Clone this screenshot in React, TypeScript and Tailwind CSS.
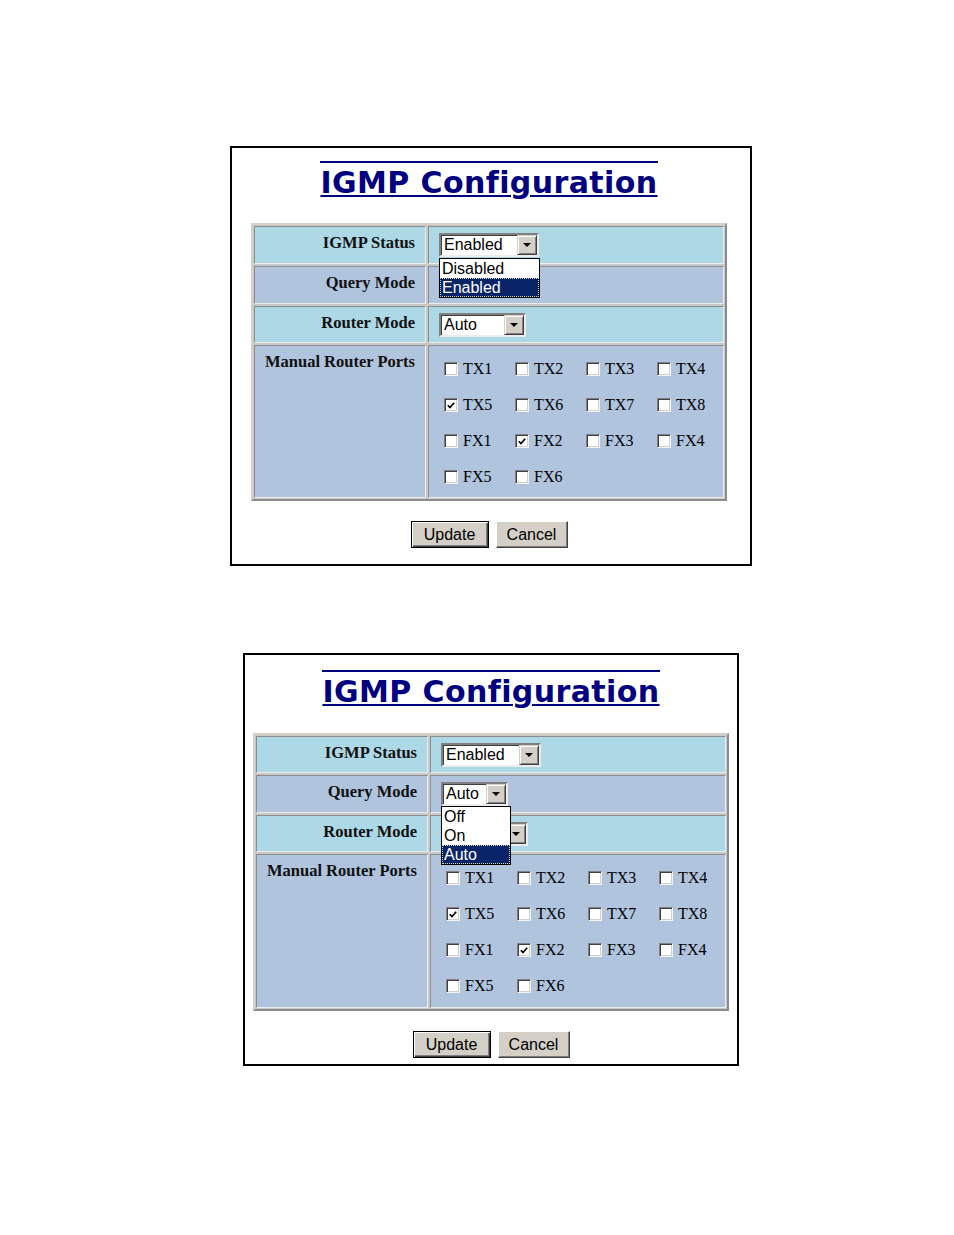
import React from 'react';

type Opt = { label: string; selected?: boolean };

const ports = ['TX1', 'TX2', 'TX3', 'TX4', 'TX5', 'TX6', 'TX7', 'TX8', 'FX1', 'FX2', 'FX3', 'FX4', 'FX5', 'FX6'];
const checked = ['TX5', 'FX2'];

function DropList({ options, className }: { options: Opt[]; className: string }) {
  return (
    <div className={`absolute left-0 top-full z-10 border border-black bg-white ${className}`}>
      {options.map((o) => (
        <div
          key={o.label}
          className={
            o.selected
              ? "h-[19px] border border-dotted border-[#d8d8a8] bg-[#0a246a] pl-[1px] text-[16px] leading-[17px] text-white font-['Liberation_Sans',Arial,sans-serif]"
              : "h-[19px] pl-[2px] text-[16px] leading-[19px] text-black font-['Liberation_Sans',Arial,sans-serif]"
          }
        >
          {o.label}
        </div>
      ))}
    </div>
  );
}

// value left out where the open list covers the box
function Select({ value, className, list }: { value?: string; className: string; list?: React.ReactNode }) {
  return (
    <div className={`relative h-[24px] ${className}`}>
      <div className="flex h-full w-full border-2 border-t-[#808080] border-l-[#808080] border-r-[#ececec] border-b-[#ececec] bg-white shadow-[inset_1px_1px_0_#404040]">
        <span className="flex-1 overflow-hidden whitespace-nowrap pl-[3px] pt-[1px] text-[16px] leading-[18px] text-black font-['Liberation_Sans',Arial,sans-serif]">
          {value}
        </span>
        <span className="flex h-[20px] w-[20px] items-center justify-center border border-t-[#d4d0c8] border-l-[#d4d0c8] border-r-[#404040] border-b-[#404040] bg-[#d4d0c8] shadow-[inset_1px_1px_0_#fff,inset_-1px_-1px_0_#808080]">
          <svg width="8" height="4" viewBox="0 0 8 4">
            <path d="M0 0h8L4 4z" fill="#000" />
          </svg>
        </span>
      </div>
      {list}
    </div>
  );
}

function CheckBox({ on }: { on: boolean }) {
  return (
    <span className="flex h-[14px] w-[14px] shrink-0 items-center justify-center border border-t-[#808080] border-l-[#808080] border-r-[#f4f4f4] border-b-[#f4f4f4] bg-white shadow-[inset_1px_1px_0_#404040,inset_-1px_-1px_0_#d4d0c8]">
      {on && (
        <svg width="8" height="7" viewBox="0 0 8 7">
          <path d="M0.8 3.2 L3 5.6 L7.2 0.8" stroke="#000" strokeWidth="1.7" fill="none" />
        </svg>
      )}
    </span>
  );
}

const labelCell =
  "border border-t-[#8c8c8c] border-l-[#8c8c8c] border-r-[#ececec] border-b-[#ececec] pr-[10px] pt-[7px] text-right text-[16.5px] font-bold leading-[18px] text-[#111] font-['Liberation_Serif','Times_New_Roman',serif]";
const valueCell =
  "flex items-center border border-t-[#8c8c8c] border-l-[#8c8c8c] border-r-[#ececec] border-b-[#ececec] pl-[10px]";

type PanelProps = {
  open: 'status' | 'query';
  outer: string;
  column: string;
  titleTop: string;
  tableTop: string;
  rows: string;
  bottom: string;
};

function Panel({ open, outer, column, titleTop, tableTop, rows, bottom }: PanelProps) {
  const statusList =
    open === 'status' ? (
      <DropList className="mt-[1px] w-[101px]" options={[{ label: 'Disabled' }, { label: 'Enabled', selected: true }]} />
    ) : null;
  const queryList =
    open === 'query' ? (
      <DropList className="w-[70px]" options={[{ label: 'Off' }, { label: 'On' }, { label: 'Auto', selected: true }]} />
    ) : null;

  return (
    <div className={`border-2 border-black bg-white ${outer}`}>
      <div className={`w-[476px] ${column}`}>
        <div className={`text-center ${titleTop}`}>
          <span className="inline-block border-t-2 border-[#000080] pt-[3px] text-[30px] font-bold leading-[34px] tracking-[0.4px] text-[#000080] underline decoration-2 underline-offset-[2px] font-['DejaVu_Sans',Verdana,sans-serif]">
            IGMP Configuration
          </span>
        </div>

        <div
          className={`grid grid-cols-[172px_296px] gap-[2px] border-2 border-t-[#d4d0c8] border-l-[#d4d0c8] border-r-[#8c8c8c] border-b-[#8c8c8c] bg-[#c8c8c8] p-[1px] ${rows} ${tableTop}`}
        >
          <div className={`${labelCell} bg-[#add8e6]`}>IGMP Status</div>
          <div className={`${valueCell} bg-[#add8e6]`}>
            <Select value="Enabled" className="w-[100px]" list={statusList} />
          </div>

          <div className={`${labelCell} bg-[#b0c4de]`}>Query Mode</div>
          <div className={`${valueCell} bg-[#b0c4de]`}>
            {open === 'query' && <Select value="Auto" className="w-[67px]" list={queryList} />}
          </div>

          <div className={`${labelCell} bg-[#add8e6]`}>Router Mode</div>
          <div className={`${valueCell} bg-[#add8e6]`}>
            <Select value={open === 'query' ? undefined : 'Auto'} className="w-[87px]" />
          </div>

          <div className={`${labelCell} bg-[#b0c4de]`}>Manual Router Ports</div>
          <div className="border border-t-[#8c8c8c] border-l-[#8c8c8c] border-r-[#ececec] border-b-[#ececec] bg-[#b0c4de] pl-[15px] pt-[14px]">
            <div className="grid grid-cols-[71px_71px_71px_71px] auto-rows-[36px]">
              {ports.map((p) => (
                <div key={p} className="flex h-[18px] items-center gap-[5px]">
                  <CheckBox on={checked.includes(p)} />
                  <span className="text-[16px] leading-[18px] text-black font-['Liberation_Serif','Times_New_Roman',serif]">{p}</span>
                </div>
              ))}
            </div>
          </div>
        </div>

        <div className={`flex justify-center gap-[7px] ${bottom}`}>
          <button className="h-[27px] w-[78px] border border-black bg-[#d4d0c8] text-[16px] text-black shadow-[inset_1px_1px_0_#fff,inset_-1px_-1px_0_#404040,inset_-2px_-2px_0_#808080] font-['Liberation_Sans',Arial,sans-serif]">
            Update
          </button>
          <button className="h-[27px] w-[72px] border border-t-white border-l-white border-r-[#404040] border-b-[#404040] bg-[#d4d0c8] text-[16px] text-black shadow-[inset_-1px_-1px_0_#808080] font-['Liberation_Sans',Arial,sans-serif]">
            Cancel
          </button>
        </div>
      </div>
    </div>
  );
}

export default function App() {
  return (
    <div className="min-h-[1235px] w-[954px] bg-white pt-[146px]">
      <Panel
        open="status"
        outer="ml-[230px] w-[522px]"
        column="ml-[19px]"
        titleTop="pt-[13px]"
        tableTop="mt-[23px]"
        rows="grid-rows-[38px_38px_37px_153px]"
        bottom="mt-[20px] pb-[16px]"
      />
      <Panel
        open="query"
        outer="mt-[87px] ml-[243px] w-[496px]"
        column="ml-[8px]"
        titleTop="pt-[15px]"
        tableTop="mt-[24px]"
        rows="grid-rows-[37px_38px_37px_154px]"
        bottom="mt-[20px] pb-[6px]"
      />
    </div>
  );
}
